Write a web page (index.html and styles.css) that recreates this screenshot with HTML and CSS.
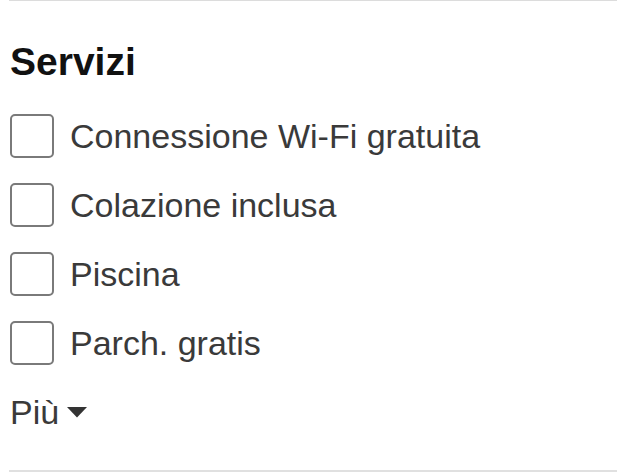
FILE: index.html
```html
<!DOCTYPE html>
<html lang="it">
<head>
<meta charset="utf-8">
<title>Servizi</title>
<link rel="stylesheet" href="styles.css">
</head>
<body>
<section class="filter">
  <h2 class="filter-title">Servizi</h2>
  <ul class="options">
    <li class="option"><span class="box"></span><span class="label">Connessione Wi-Fi gratuita</span></li>
    <li class="option"><span class="box"></span><span class="label">Colazione inclusa</span></li>
    <li class="option"><span class="box"></span><span class="label">Piscina</span></li>
    <li class="option"><span class="box"></span><span class="label">Parch. gratis</span></li>
    <li class="more">Più<svg class="caret" width="20" height="11" viewBox="0 0 20 11"><polygon points="0,0 20,0 10,10.5" fill="#333"/></svg></li>
  </ul>
</section>
</body>
</html>
```
FILE: styles.css
```css
html, body {
  margin: 0;
  padding: 0;
  background: #ffffff;
}
body {
  font-family: "Liberation Sans", Arial, sans-serif;
}
.filter {
  margin: 0 7px 0 9px;
  padding: 38px 0 36px 1px;
  border-top: 1px solid #dcdcdc;
  border-bottom: 2px solid #e0e0e0;
}
.filter-title {
  margin: 0;
  font-size: 39px;
  line-height: 46px;
  font-weight: bold;
  color: #111;
}
.options {
  list-style: none;
  margin: 29px 0 0 0;
  padding: 0;
  display: flex;
  flex-direction: column;
  gap: 25px;
}
.option, .more {
  display: flex;
  align-items: center;
  height: 44px;
  font-size: 34px;
  line-height: 44px;
  color: #3a3a3a;
}
.box {
  width: 40px;
  height: 40px;
  border: 2px solid #7a7a7a;
  border-radius: 5px;
  flex: none;
}
.label {
  margin-left: 16px;
  white-space: nowrap;
}
.caret {
  margin-left: 8px;
  margin-top: 1px;
}
```
